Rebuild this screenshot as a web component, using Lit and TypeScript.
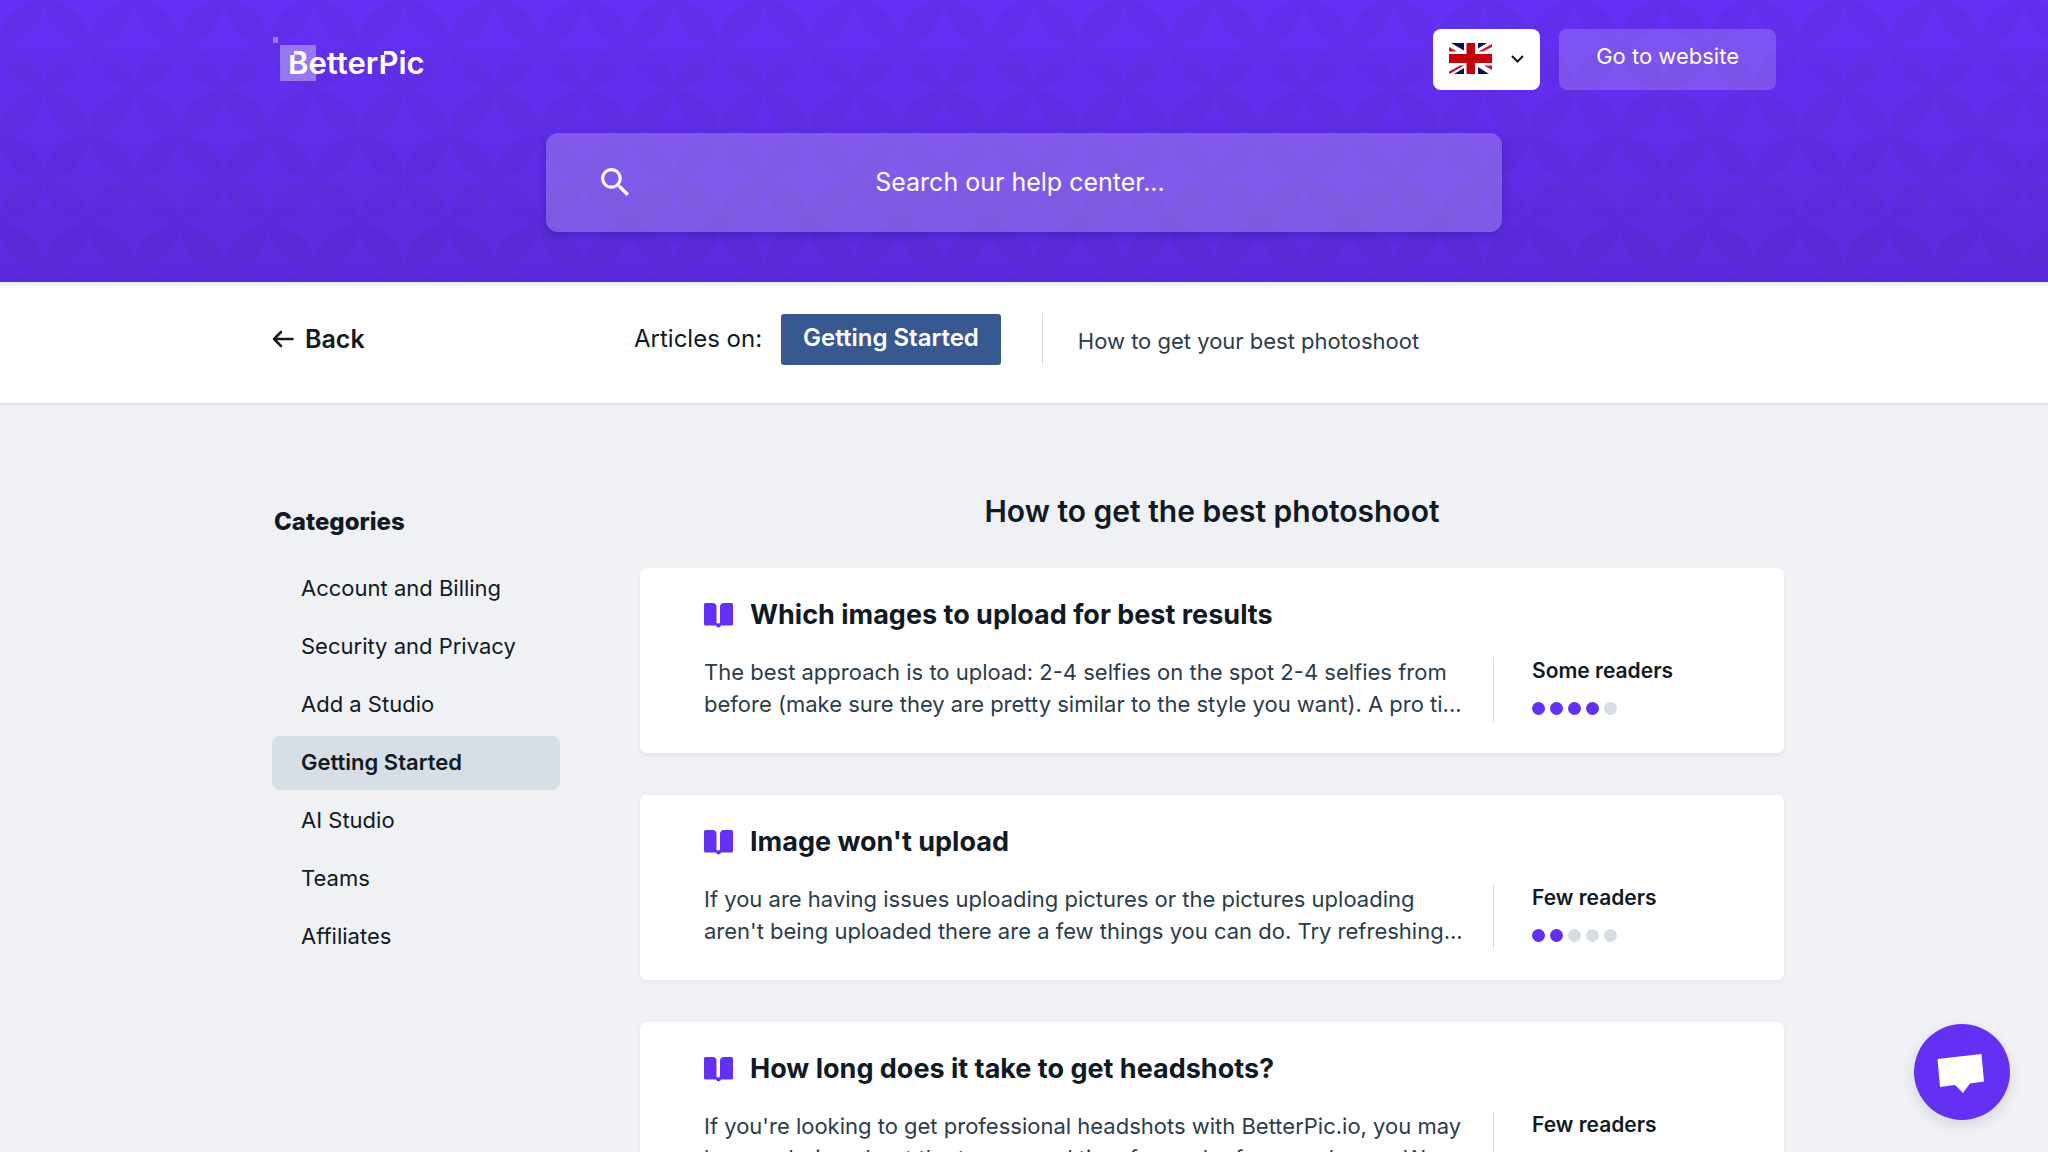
import { LitElement, html, svg, css } from "lit";
import { customElement, property } from "lit/decorators.js";

interface Article {
  title: string;
  excerpt: string;
  readers: string;
  score: number;
}

const CATEGORIES = [
  "Account and Billing",
  "Security and Privacy",
  "Add a Studio",
  "Getting Started",
  "AI Studio",
  "Teams",
  "Affiliates",
];

const ARTICLES: Article[] = [
  {
    title: "Which images to upload for best results",
    excerpt:
      "The best approach is to upload: 2-4 selfies on the spot 2-4 selfies from before (make sure they are pretty similar to the style you want). A pro ti...",
    readers: "Some readers",
    score: 4,
  },
  {
    title: "Image won't upload",
    excerpt:
      "If you are having issues uploading pictures or the pictures uploading aren't being uploaded there are a few things you can do. Try refreshing...",
    readers: "Few readers",
    score: 2,
  },
  {
    title: "How long does it take to get headshots?",
    excerpt:
      "If you're looking to get professional headshots with BetterPic.io, you may be wondering about the turnaround time for each of our packages. We...",
    readers: "Few readers",
    score: 2,
  },
];

const bookIcon = svg`<path d="M0 1.5Q0 0 1.5 0H8.500Q12.500 0 12.500 4V19.500Q12.500 20.500 14.250 20.500Q16 20.500 16 19.500V4Q16 0 20 0H27.500Q29 0 29 1.500V21Q29 22.500 27.500 22.500H17Q16.300 24.500 14.500 24.500Q12.700 24.500 12 22.500H1.500Q0 22.500 0 21Z"/>`;

@customElement("article-card")
export class ArticleCard extends LitElement {
  @property({ attribute: false }) article!: Article;

  static styles = css`
    :host {
      display: block;
    }
    .card {
      display: block;
      padding: 30px 64px 31px;
      border-radius: 7px;
      background: #fff;
      box-shadow: 0 2px 5px rgba(20, 30, 60, 0.06);
      color: #111a24;
      text-decoration: none;
    }
    .title {
      display: flex;
      align-items: center;
      gap: 17px;
      margin: 0;
      font-size: 27px;
      line-height: 34px;
      font-weight: 700;
    }
    .book {
      flex: none;
      width: 29px;
      height: 25px;
      fill: #6430f3;
    }
    .row {
      display: flex;
      align-items: flex-start;
      margin-top: 24px;
    }
    .excerpt {
      flex: 1;
      margin: 0 28px 0 0;
      font-size: 22px;
      line-height: 32px;
      color: #2b3c4a;
    }
    .popularity {
      box-sizing: border-box;
      width: 227px;
      height: 65px;
      margin-top: 1px;
      padding-left: 38px;
      border-left: 1px solid #d6dce3;
    }
    .readers {
      font-size: 21px;
      line-height: 28px;
      font-weight: 600;
    }
    .dots {
      display: flex;
      gap: 5px;
      margin-top: 17px;
    }
    .dot {
      width: 13px;
      height: 13px;
      border-radius: 50%;
      background: #d6dde4;
    }
    .dot.on {
      background: #6430f3;
    }
  `;

  render() {
    const a = this.article;
    return html`
      <a class="card" href="#article">
        <h2 class="title">
          <svg class="book" viewBox="0 0 29 25" aria-hidden="true">${bookIcon}</svg>
          ${a.title}
        </h2>
        <div class="row">
          <p class="excerpt">${a.excerpt}</p>
          <div class="popularity">
            <div class="readers">${a.readers}</div>
            <div class="dots">
              ${[0, 1, 2, 3, 4].map((i) => html`<span class="dot ${i < a.score ? "on" : ""}"></span>`)}
            </div>
          </div>
        </div>
      </a>
    `;
  }
}

@customElement("app-root")
export class AppRoot extends LitElement {
  static styles = css`
    :host {
      display: block;
      height: 100vh;
      overflow-y: auto;
      scrollbar-width: none;
      background: #eff1f5;
      color: #111a24;
      font-family: Inter, "Liberation Sans", sans-serif;
    }
    a {
      color: inherit;
      text-decoration: none;
    }
    button {
      font: inherit;
      border: 0;
      cursor: pointer;
    }
    .header {
      position: relative;
      background: #6430f6;
      padding: 29px 0 50px;
    }
    .pattern {
      position: absolute;
      inset: 0;
      width: 100%;
      height: 100%;
    }
    .shade {
      position: absolute;
      inset: 0;
      background: linear-gradient(rgba(0, 0, 0, 0), rgba(0, 0, 0, 0.1));
    }
    .wrap {
      box-sizing: border-box;
      max-width: 1520px;
      margin: 0 auto;
      padding: 0 8px;
    }
    .topbar {
      position: relative;
      display: flex;
      align-items: flex-start;
      gap: 19px;
    }
    .logo {
      position: relative;
      margin-right: auto;
      padding: 16px 0 0 16px;
      font-size: 31px;
      line-height: 36px;
      font-weight: 600;
      color: #fff;
    }
    .logo-art {
      position: absolute;
      left: 0;
      top: 8px;
      width: 44px;
      height: 44px;
      fill: #fff;
      fill-opacity: 0.35;
    }
    .logo-text {
      position: relative;
    }
    .logo-cuts {
      position: absolute;
      left: 0;
      top: 0;
      width: 152px;
      height: 52px;
    }
    .lang {
      display: flex;
      align-items: center;
      gap: 19px;
      height: 61px;
      padding: 0 16px 2px 16px;
      border-radius: 8px;
      background: #fff;
    }
    .flag {
      width: 43px;
      height: 31px;
    }
    .chevron {
      width: 13px;
      height: 8px;
      fill: none;
      stroke: #14181f;
      stroke-width: 2;
    }
    .website {
      box-sizing: border-box;
      height: 61px;
      padding: 11px 37px 18px;
      border-radius: 8px;
      background: rgba(255, 255, 255, 0.18);
      color: #fff;
      font-size: 22px;
      line-height: 32px;
    }
    .search {
      position: relative;
      display: flex;
      align-items: center;
      box-sizing: border-box;
      max-width: 956px;
      height: 99px;
      margin: 43px auto 0;
      padding: 0 55px 2px;
      border-radius: 12px;
      background: rgba(255, 255, 255, 0.22);
      box-shadow: 0 3px 8px rgba(30, 0, 110, 0.28);
    }
    .search-icon {
      flex: none;
      width: 28px;
      height: 28px;
      fill: #fff;
    }
    .search-input {
      flex: 1;
      min-width: 0;
      margin-right: 36px;
      padding: 0;
      border: 0;
      outline: 0;
      background: none;
      color: #fff;
      text-align: center;
      font: 400 25px/36px Inter, "Liberation Sans", sans-serif;
    }
    .search-input::placeholder {
      color: #fff;
      opacity: 1;
    }
    .crumbs {
      background: linear-gradient(#ececf4, #fff 7px);
      border-bottom: 2px solid #dfe3e9;
    }
    .crumbs-row {
      display: grid;
      grid-template-columns: 362px 1fr;
      align-items: center;
      padding-top: 32px;
      padding-bottom: 38px;
    }
    .back {
      display: flex;
      align-items: center;
      gap: 11px;
      padding-bottom: 2px;
      font-size: 25px;
      line-height: 36px;
      font-weight: 600;
    }
    .arrow {
      width: 22px;
      height: 18px;
      fill: none;
      stroke: #14181f;
      stroke-width: 2.5;
      stroke-linecap: round;
      stroke-linejoin: round;
    }
    .trail {
      display: flex;
      align-items: center;
    }
    .on-label {
      padding-bottom: 2px;
      font-size: 24px;
      line-height: 36px;
    }
    .tag {
      margin-left: 19px;
      padding: 8px 22px 11px;
      border-radius: 3px;
      background: #37598f;
      color: #fff;
      font-size: 24px;
      line-height: 32px;
      font-weight: 600;
    }
    .here {
      margin-left: 41px;
      padding: 12px 0 8px 35px;
      border-left: 1px solid #d3d9df;
      font-size: 22px;
      line-height: 31px;
      color: #2b3c4a;
    }
    .content {
      display: grid;
      grid-template-columns: 288px minmax(0, 1fr);
      column-gap: 80px;
      padding: 86px 0 60px 8px;
    }
    .side-title {
      margin: 13px 2px 22px;
      font-size: 24px;
      line-height: 36px;
      font-weight: 800;
    }
    .cats {
      display: grid;
      gap: 4px;
      margin: 0;
      padding: 0;
      list-style: none;
    }
    .cat {
      display: block;
      padding: 10px 29px 12px;
      border-radius: 8px;
      font-size: 22px;
      line-height: 32px;
    }
    .cat.active {
      background: #d6dee6;
      font-weight: 600;
    }
    .main-title {
      margin: 0;
      text-align: center;
      font-size: 30px;
      line-height: 40px;
      font-weight: 600;
    }
    .cards {
      display: grid;
      gap: 42px;
      margin-top: 37px;
    }
    .chat {
      position: fixed;
      right: 38px;
      bottom: 32px;
      width: 96px;
      height: 96px;
      padding: 0;
      border-radius: 50%;
      background: #6430f3;
      box-shadow: 0 5px 14px rgba(30, 30, 60, 0.12);
    }
    .chat-icon {
      display: block;
      width: 96px;
      height: 96px;
      fill: #fff;
    }
  `;

  render() {
    return html`
      <header class="header">
        <svg class="pattern" aria-hidden="true">
          <defs>
            <pattern id="petals" x="-1" y="-1" width="90" height="90" patternUnits="userSpaceOnUse">
              <path
                fill="#302040"
                fill-opacity="0.06"
                d="M45 0A45 45 0 0 1 0 45A45 45 0 0 1 45 0ZM45 0A45 45 0 0 1 90 45A45 45 0 0 1 45 0ZM0 45A45 45 0 0 1 45 90A45 45 0 0 1 0 45ZM90 45A45 45 0 0 1 45 90A45 45 0 0 1 90 45Z"
              />
            </pattern>
          </defs>
          <rect width="100%" height="100%" fill="url(#petals)" />
        </svg>
        <div class="shade"></div>
        <div class="wrap topbar">
          <a class="logo" href="#home">
            <svg class="logo-art" viewBox="0 0 44 44" aria-hidden="true">
              <rect x="1" y="0" width="5" height="6" />
              <rect x="8" y="8" width="36" height="36" />
            </svg>
            <span class="logo-text">BetterPic</span>
            <svg class="logo-cuts" viewBox="0 0 152 52" aria-hidden="true">
              <rect x="17" y="21" width="5" height="5" fill="#9674ee" />
              <rect x="107" y="21" width="5" height="5" fill="#602eea" />
            </svg>
          </a>
          <button class="lang" type="button" aria-label="Language: English" aria-haspopup="listbox">
            <svg class="flag" viewBox="0 0 43 31" aria-hidden="true">
              <rect width="43" height="31" fill="#fff" />
              <path
                fill="#0a1050"
                d="M2 0H15V7.500ZM29 0H38L29 5.500ZM5 31L15 25V31ZM29 24L40 31H29Z"
              />
              <path
                fill="#c4142c"
                d="M0 4L8 8.500H0ZM43 1V4L34 8.500H29.500ZM0 28.500L11 22.500H15L1.500 30.500H0ZM35 22.500H43V27Z"
              />
              <path fill="#c4000c" d="M17.500 0H26V11H43V20H26V31H17.500V20H0V11H17.500Z" />
            </svg>
            <svg class="chevron" viewBox="0 0 13 8" aria-hidden="true"><path d="M1 1L6.500 6.500L12 1" /></svg>
          </button>
          <a class="website" href="#website">Go to website</a>
        </div>
        <form class="search" role="search">
          <svg class="search-icon" viewBox="3 3 17.500 17.500" aria-hidden="true">
            <path
              d="M15.500 14h-.79l-.28-.27A6.471 6.471 0 0 0 16 9.500 6.500 6.500 0 1 0 9.500 16c1.610 0 3.090-.59 4.230-1.570l.27.28v.79l5 4.990L20.490 19l-4.990-5zm-6 0C7.010 14 5 11.990 5 9.500S7.010 5 9.500 5 14 7.010 14 9.500 11.990 14 9.500 14z"
            />
          </svg>
          <input class="search-input" type="text" aria-label="Search our help center" placeholder="Search our help center..." />
        </form>
      </header>

      <nav class="crumbs" aria-label="Breadcrumb">
        <div class="wrap crumbs-row">
          <a class="back" href="#back">
            <svg class="arrow" viewBox="0 0 22 18" aria-hidden="true"><path d="M2 9H20.500M9 2L2 9L9 16" /></svg>
            Back
          </a>
          <div class="trail">
            <span class="on-label">Articles on:</span>
            <a class="tag" href="#getting-started">Getting Started</a>
            <span class="here">How to get your best photoshoot</span>
          </div>
        </div>
      </nav>

      <div class="wrap content">
        <aside>
          <h2 class="side-title">Categories</h2>
          <ul class="cats">
            ${CATEGORIES.map(
              (c) => html`<li><a class="cat ${c === "Getting Started" ? "active" : ""}" href="#category">${c}</a></li>`
            )}
          </ul>
        </aside>
        <main>
          <h1 class="main-title">How to get the best photoshoot</h1>
          <div class="cards">${ARTICLES.map((a) => html`<article-card .article=${a}></article-card>`)}</div>
        </main>
      </div>

      <button class="chat" type="button" aria-label="Open chat">
        <svg class="chat-icon" viewBox="0 0 96 96" aria-hidden="true">
          <path d="M23.500 35L67.500 30L70 57.500L56 59.500L49 69L41 61L26 63Z" />
        </svg>
      </button>
    `;
  }
}
